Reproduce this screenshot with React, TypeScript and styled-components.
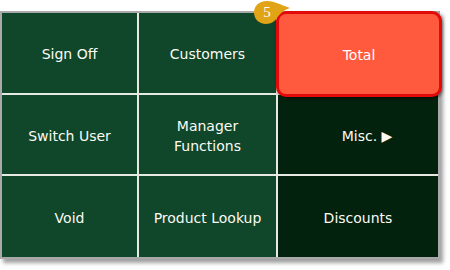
import React from "react";
import styled, { createGlobalStyle } from "styled-components";

const Global = createGlobalStyle`
  html, body { margin: 0; padding: 0; background: #ffffff; }
  body { font-family: "DejaVu Sans", Verdana, sans-serif; }
`;

const Page = styled.div`
  padding: 11px 0 0 0;
  width: 450px;
  height: 270px;
  box-sizing: border-box;
`;

const Panel = styled.div`
  position: relative;
  display: grid;
  grid-template-columns: 135px 137px 160px;
  grid-template-rows: 80px 79px 81px;
  gap: 2px;
  width: max-content;
  background: #e9e9e3;
  border: 2px solid #a9a9a9;
  box-shadow: 3px 4px 4px rgba(0, 0, 0, 0.38);
`;

const Cell = styled.div<{ $dark?: boolean; $shift?: number }>`
  position: relative;
  display: flex;
  align-items: center;
  justify-content: center;
  text-align: center;
  background: ${(p) => (p.$dark ? "#03220e" : "#10462a")};
  color: #fbfbf4;
  font-size: 14px;
  line-height: 20px;
  padding-left: ${(p) => p.$shift ?? 0}px;
  padding-top: 2px;
  box-sizing: border-box;
`;

const TotalButton = styled.div`
  position: absolute;
  left: -2px;
  top: -2px;
  width: 166px;
  height: 86px;
  box-sizing: border-box;
  border: 3px solid #e30a0a;
  border-radius: 10px;
  background: #ff5a3d;
  box-shadow: 1px 2px 3px rgba(0, 0, 0, 0.45);
  display: flex;
  align-items: center;
  justify-content: center;
  color: #ffffff;
  font-size: 14px;
  padding-top: 2px;
  z-index: 2;
`;

const Badge = styled.div`
  position: absolute;
  left: 249px;
  top: -14px;
  width: 40px;
  height: 26px;
  z-index: 3;
`;

const BadgeNum = styled.span`
  position: absolute;
  left: 8px;
  top: 3px;
  width: 16px;
  text-align: center;
  font-family: "Liberation Serif", "DejaVu Serif", serif;
  font-size: 15px;
  line-height: 20px;
  color: #ffffff;
`;

export default function App() {
  return (
    <>
      <Global />
      <Page>
        <Panel>
          <Cell>Sign Off</Cell>
          <Cell>Customers</Cell>
          <Cell>
            <TotalButton>Total</TotalButton>
          </Cell>
          <Cell>Switch User</Cell>
          <Cell>
            Manager
            <br />
            Functions
          </Cell>
          <Cell $dark $shift={18}>Misc. ▶</Cell>
          <Cell>Void</Cell>
          <Cell>Product Lookup</Cell>
          <Cell $dark>Discounts</Cell>
          <Badge>
            <svg width="40" height="26" viewBox="0 0 40 26">
              <path
                d="M16 2 C 24 2, 30 6, 39 9 C 32 11, 28 16, 26 19 C 24 22, 20 25, 15 25 C 8 25, 3 20, 3 13.5 C 3 7, 8 2, 16 2 Z"
                fill="#e1a417"
              />
            </svg>
            <BadgeNum>5</BadgeNum>
          </Badge>
        </Panel>
      </Page>
    </>
  );
}
